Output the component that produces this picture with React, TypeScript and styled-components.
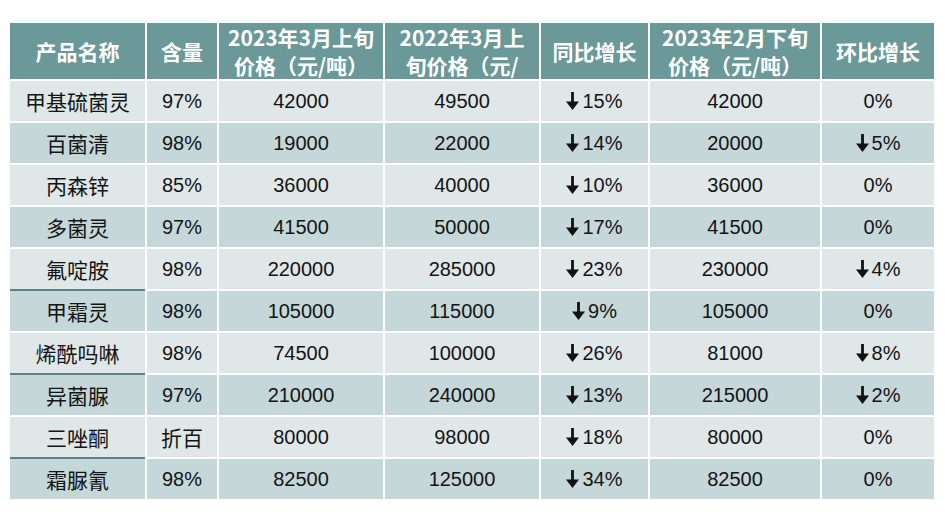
import styled, { createGlobalStyle } from "styled-components";

const GlobalStyle = createGlobalStyle`
  html, body {
    margin: 0;
    padding: 0;
    background: #ffffff;
  }
`;

type Change = { down: boolean; value: string };

const rows: {
  name: string;
  content: string;
  price2023: string;
  price2022: string;
  yoy: Change;
  priceFeb: string;
  mom: Change;
  line?: boolean;
}[] = [
  { name: "甲基硫菌灵", content: "97%", price2023: "42000", price2022: "49500", yoy: { down: true, value: "15%" }, priceFeb: "42000", mom: { down: false, value: "0%" } },
  { name: "百菌清", content: "98%", price2023: "19000", price2022: "22000", yoy: { down: true, value: "14%" }, priceFeb: "20000", mom: { down: true, value: "5%" } },
  { name: "丙森锌", content: "85%", price2023: "36000", price2022: "40000", yoy: { down: true, value: "10%" }, priceFeb: "36000", mom: { down: false, value: "0%" } },
  { name: "多菌灵", content: "97%", price2023: "41500", price2022: "50000", yoy: { down: true, value: "17%" }, priceFeb: "41500", mom: { down: false, value: "0%" } },
  { name: "氟啶胺", content: "98%", price2023: "220000", price2022: "285000", yoy: { down: true, value: "23%" }, priceFeb: "230000", mom: { down: true, value: "4%" }, line: true },
  { name: "甲霜灵", content: "98%", price2023: "105000", price2022: "115000", yoy: { down: true, value: "9%" }, priceFeb: "105000", mom: { down: false, value: "0%" } },
  { name: "烯酰吗啉", content: "98%", price2023: "74500", price2022: "100000", yoy: { down: true, value: "26%" }, priceFeb: "81000", mom: { down: true, value: "8%" }, line: true },
  { name: "异菌脲", content: "97%", price2023: "210000", price2022: "240000", yoy: { down: true, value: "13%" }, priceFeb: "215000", mom: { down: true, value: "2%" } },
  { name: "三唑酮", content: "折百", price2023: "80000", price2022: "98000", yoy: { down: true, value: "18%" }, priceFeb: "80000", mom: { down: false, value: "0%" }, line: true },
  { name: "霜脲氰", content: "98%", price2023: "82500", price2022: "125000", yoy: { down: true, value: "34%" }, priceFeb: "82500", mom: { down: false, value: "0%" } },
];

function DownArrow() {
  return (
    <ArrowSvg width="13" height="18" viewBox="0 0 13 18">
      <rect x="5.1" y="0" width="2.8" height="11" fill="#111" />
      <polygon points="0,9.5 13,9.5 6.5,18" fill="#111" />
    </ArrowSvg>
  );
}

function ChangeValue({ change }: { change: Change }) {
  return (
    <ChangeWrap>
      {change.down && <DownArrow />}
      <span>{change.value}</span>
    </ChangeWrap>
  );
}

export default function App() {
  return (
    <>
      <GlobalStyle />
      <Page>
        <Table>
          <HeadCell>产品名称</HeadCell>
          <HeadCell>含量</HeadCell>
          <HeadCell>
            <HeadLine>2023年3月上旬</HeadLine>
            <HeadLine>价格（元/吨）</HeadLine>
          </HeadCell>
          <HeadCell>
            <HeadLine>2022年3月上</HeadLine>
            <HeadLine>旬价格（元/</HeadLine>
          </HeadCell>
          <HeadCell>同比增长</HeadCell>
          <HeadCell>
            <HeadLine>2023年2月下旬</HeadLine>
            <HeadLine>价格（元/吨）</HeadLine>
          </HeadCell>
          <HeadCell>环比增长</HeadCell>

          {rows.map((r, i) => {
            const dark = i % 2 === 1;
            return (
              <Row key={r.name}>
                <Cell $dark={dark} $cjk $line={r.line}>{r.name}</Cell>
                <Cell $dark={dark} $cjk={r.content === "折百"}>{r.content}</Cell>
                <Cell $dark={dark}>{r.price2023}</Cell>
                <Cell $dark={dark}>{r.price2022}</Cell>
                <Cell $dark={dark}>
                  <ChangeValue change={r.yoy} />
                </Cell>
                <Cell $dark={dark}>{r.priceFeb}</Cell>
                <Cell $dark={dark}>
                  <ChangeValue change={r.mom} />
                </Cell>
              </Row>
            );
          })}
        </Table>
      </Page>
    </>
  );
}

const Page = styled.div`
  width: 945px;
  height: 531px;
  padding: 23px 0 0 10px;
  box-sizing: border-box;
  background: #ffffff;
`;

const Table = styled.div`
  display: grid;
  grid-template-columns: 135px 70px 164px 154px 107px 170px 112px;
  grid-template-rows: 56px;
  grid-auto-rows: 40px;
  gap: 2px;
  width: 924px;
`;

const Row = styled.div`
  display: contents;
`;

const HeadCell = styled.div`
  background: #6b9898;
  color: #ffffff;
  font-family: "Noto Sans CJK SC", "Liberation Sans", sans-serif;
  font-weight: 700;
  font-size: 21px;
  line-height: 28px;
  display: flex;
  flex-direction: column;
  align-items: center;
  justify-content: center;
  text-align: center;
  overflow: hidden;
  white-space: nowrap;
`;

const HeadLine = styled.span`
  display: block;
  height: 28px;
  line-height: 28px;
`;

const Cell = styled.div<{ $dark?: boolean; $cjk?: boolean; $line?: boolean }>`
  background: ${(p) => (p.$dark ? "#c5d7d9" : "#dfe7e8")};
  color: #141414;
  font-family: ${(p) =>
    p.$cjk
      ? `"Noto Sans CJK SC", sans-serif`
      : `"Liberation Sans", "Noto Sans CJK SC", sans-serif`};
  font-size: ${(p) => (p.$cjk ? "21px" : "20px")};
  display: flex;
  align-items: center;
  justify-content: center;
  box-shadow: ${(p) => (p.$line ? "0 2px 0 #5d8282" : "none")};
`;

const ChangeWrap = styled.span`
  display: inline-flex;
  align-items: flex-end;
  gap: 3px;
  line-height: 1;
`;

const ArrowSvg = styled.svg`
  display: block;
  flex-shrink: 0;
  margin-bottom: 1px;
`;
